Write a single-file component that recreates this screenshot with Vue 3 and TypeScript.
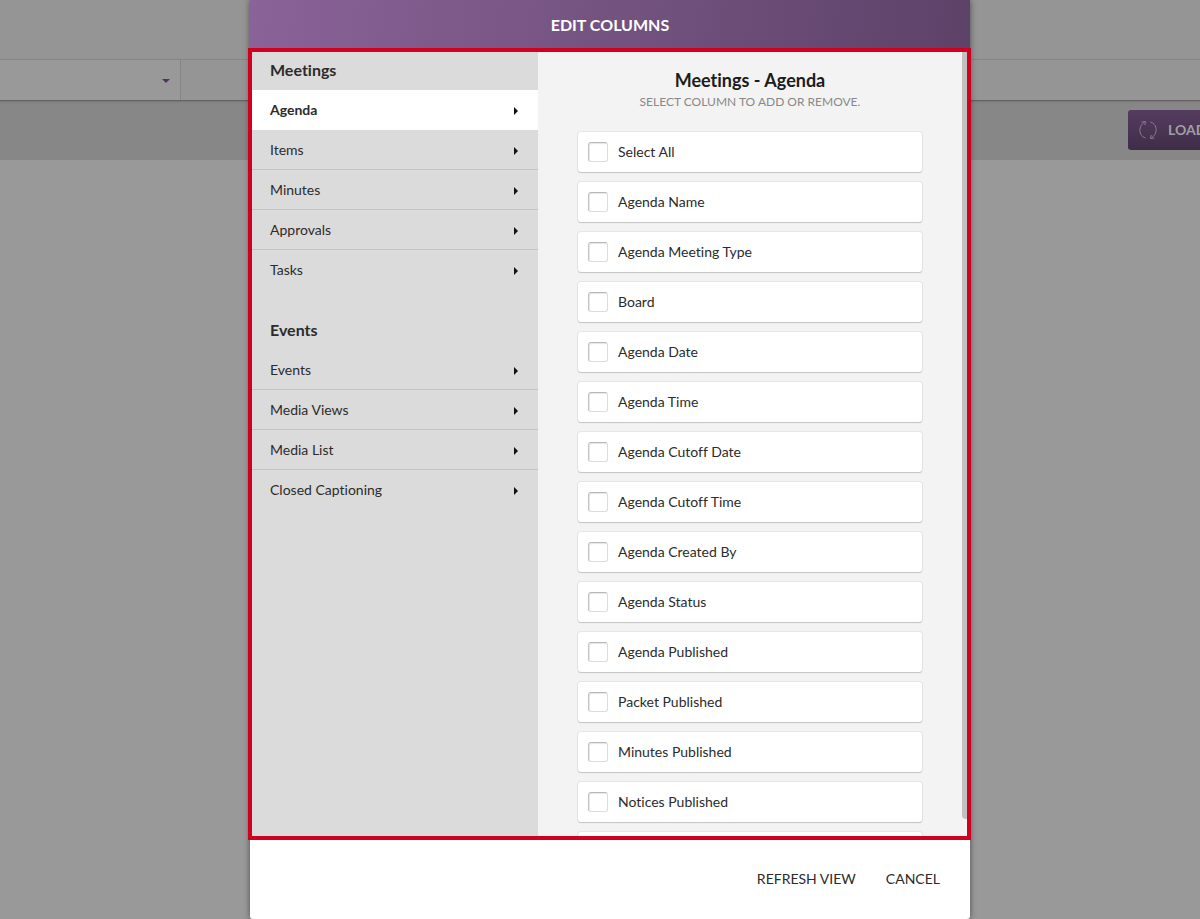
<script setup lang="ts">
import { ref } from 'vue'

interface NavGroup {
  title: string
  items: string[]
}

const groups: NavGroup[] = [
  { title: 'Meetings', items: ['Agenda', 'Items', 'Minutes', 'Approvals', 'Tasks'] },
  { title: 'Events', items: ['Events', 'Media Views', 'Media List', 'Closed Captioning'] },
]

const columns: string[] = [
  'Select All',
  'Agenda Name',
  'Agenda Meeting Type',
  'Board',
  'Agenda Date',
  'Agenda Time',
  'Agenda Cutoff Date',
  'Agenda Cutoff Time',
  'Agenda Created By',
  'Agenda Status',
  'Agenda Published',
  'Packet Published',
  'Minutes Published',
  'Notices Published',
]

const active = ref('Meetings/Agenda')
const checked = ref<string[]>([])
</script>

<template>
  <div class="screen">
    <div class="page">
      <div class="page-top"></div>
      <div class="filters">
        <button class="filter" type="button" aria-label="Filter">
          <svg width="8" height="4" viewBox="0 0 8 4"><path d="M0 0h8L4 4z" fill="#4f375a" /></svg>
        </button>
      </div>
      <div class="toolbar">
        <button class="load" type="button">
          <svg width="20" height="20" viewBox="0 0 20 20" fill="none" stroke="#857b8b" stroke-width="1">
            <path d="M7.500 18C4 17 1.800 14 1.800 10.500C1.800 7 3.500 4 6.500 2.200" />
            <path d="M3.500 2L7.500 1.500L6.800 5" />
            <path d="M12.500 2C16 3 18.200 6 18.200 9.500C18.200 13 16.500 16 13.500 17.800" />
            <path d="M16.500 18L12.500 18.500L13.200 15" />
          </svg>
          <span>LOAD</span>
        </button>
      </div>
    </div>

    <section class="modal" role="dialog" aria-labelledby="dialog-title">
      <header class="modal-header"><h1 id="dialog-title">EDIT COLUMNS</h1></header>
      <div class="modal-body">
        <nav class="side">
          <div v-for="group in groups" :key="group.title" class="group">
            <h2>{{ group.title }}</h2>
            <button
              v-for="item in group.items"
              :key="item"
              type="button"
              class="nav-item"
              :class="{ active: active === `${group.title}/${item}` }"
              @click="active = `${group.title}/${item}`"
            >
              <span>{{ item }}</span>
              <svg width="4" height="10" viewBox="0 0 4 10"><path d="M0 2L4 6L0 10z" fill="#111" /></svg>
            </button>
          </div>
        </nav>
        <div class="content">
          <div class="scroll">
            <h2>Meetings - Agenda</h2>
            <p>SELECT COLUMN TO ADD OR REMOVE.</p>
            <div class="cards">
              <label v-for="column in columns" :key="column" class="card">
                <input v-model="checked" type="checkbox" :value="column" />
                <span>{{ column }}</span>
              </label>
              <div class="card"></div>
            </div>
          </div>
          <div class="track"><div class="thumb"></div></div>
        </div>
        <div class="frame"></div>
      </div>
      <footer class="modal-footer">
        <button type="button">REFRESH VIEW</button>
        <button type="button">CANCEL</button>
      </footer>
    </section>
  </div>
</template>

<style>
body {
  margin: 0;
}
</style>

<style scoped>
.screen {
  position: relative;
  height: 100vh;
  overflow: hidden;
  background: #999;
  color: #2b2b2b;
  font-family: Lato, sans-serif;
  font-size: 14px;
  line-height: 20px;
  font-variant-ligatures: none;
}
.screen * {
  box-sizing: border-box;
}
button {
  margin: 0;
  padding: 0;
  border: 0;
  background: none;
  color: inherit;
  font: inherit;
  font-variant-ligatures: none;
  cursor: pointer;
}
h1,
h2,
p {
  margin: 0;
}
svg {
  flex: none;
  display: block;
}
.page {
  position: absolute;
  inset: 0;
}
.page-top {
  height: 60px;
  background: #959595;
  border-bottom: 1px solid #858585;
}
.filters {
  height: 41px;
  background: #959595;
  border-bottom: 1px solid #636363;
}
.filter {
  display: flex;
  align-items: center;
  justify-content: flex-end;
  width: 181px;
  height: 40px;
  padding: 2px 10px 0 0;
  background: #999;
  border-right: 1px solid #858585;
}
.toolbar {
  height: 59px;
  padding: 9px 0 0 94%;
  background: #878787;
  box-shadow: inset 0 2px 2px -1px #777;
}
.load {
  display: flex;
  align-items: center;
  gap: 10px;
  width: 120px;
  height: 40px;
  padding-left: 10px;
  border-radius: 3px;
  background: linear-gradient(#553c60, #3f2d48);
  color: #a0a0a0;
  font-weight: 700;
}
.modal {
  position: absolute;
  inset: 0;
  display: flex;
  flex-direction: column;
  width: 60%;
  margin: 0 auto 0 250px;
  background: #fff;
  border-radius: 0 0 3px 3px;
  box-shadow: 0 0 6px rgba(0, 0, 0, 0.5);
}
.modal-header {
  display: flex;
  align-items: center;
  justify-content: center;
  height: 50px;
  flex: none;
  background: linear-gradient(100deg, #8a6398, #5d4268);
  color: #fff;
}
.modal-header h1 {
  font-size: 16px;
  line-height: 20px;
  font-weight: 700;
}
.modal-body {
  position: relative;
  flex: 1;
  min-height: 0;
  display: flex;
}
.side {
  width: 40%;
  background: #dbdbdb;
}
.group {
  padding-bottom: 20px;
}
.group h2 {
  padding: 10px 20px;
  font-size: 16px;
  line-height: 20px;
  font-weight: 700;
}
.nav-item {
  display: flex;
  align-items: center;
  justify-content: space-between;
  width: 100%;
  height: 40px;
  padding: 0 20px;
  border-bottom: 1px solid #c4c4c4;
}
.nav-item:last-child {
  border-bottom-color: transparent;
}
.nav-item.active {
  background: #fff;
  border-bottom-color: #fff;
  font-weight: 700;
}
.content {
  flex: 1;
  min-width: 0;
  display: flex;
  background: #f3f3f3;
}
.scroll {
  flex: 1;
  overflow: hidden;
  padding: 18px 40px 0;
  text-align: center;
}
.scroll h2 {
  color: #1c1c1c;
  font-size: 18px;
  line-height: 24px;
  font-weight: 700;
}
.scroll p {
  color: #888;
  font-size: 12px;
  line-height: 20px;
}
.cards {
  display: flex;
  flex-direction: column;
  gap: 10px;
  padding-top: 20px;
}
.card {
  display: flex;
  align-items: center;
  gap: 10px;
  height: 40px;
  flex: none;
  padding: 0 10px;
  background: #fff;
  border-radius: 3px;
  box-shadow: 0 1px 1px #c4c4c4, 0 0 0 1px #e6e6e6;
}
.card input {
  appearance: none;
  width: 20px;
  height: 20px;
  margin: 0;
  background: #fff;
  border: 1px solid #dcdcdc;
  border-top-color: #b8b8b8;
  border-left-color: #c4c4c4;
  border-radius: 3px;
  box-shadow: inset 1px 1px 1px #e6e6e6;
}
.card input:checked {
  background: #76558a;
}
.track {
  width: 8px;
}
.thumb {
  height: calc(100% - 19px);
  background: #c1c1c1;
  border-radius: 4px;
}
.frame {
  position: absolute;
  inset: -2px -1px -2px -2px;
  border: 4px solid #cf0020;
  pointer-events: none;
}
.modal-footer {
  display: flex;
  align-items: center;
  justify-content: flex-end;
  gap: 30px;
  height: 81px;
  flex: none;
  padding: 0 30px;
}
</style>
